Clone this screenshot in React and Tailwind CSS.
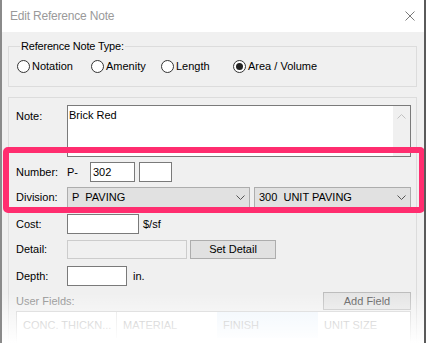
import { useState } from 'react';

export default function App() {
  const [type, setType] = useState('area');

  return (
    <div className="relative w-[426px] h-[343px] overflow-hidden bg-[#f0f0f0] border-l-2 border-r-2 border-l-[#8a8a8a] border-r-[#5a5a5a] font-['Liberation_Sans',Arial,sans-serif] text-[11px] text-black">
      {/* title bar */}
      <div className="h-[32px] bg-white flex items-center justify-between pl-[8px] pr-[9px]">
        <span className="text-[12px] text-[#9a9a9a] tracking-[-0.2px]">Edit Reference Note</span>
        <svg width="10" height="10" viewBox="0 0 10 10">
          <path d="M0.5 0.5 L9.5 9.5 M9.5 0.5 L0.5 9.5" stroke="#7a7a7a" strokeWidth="1" fill="none" />
        </svg>
      </div>

      <div className="pl-[6px] pr-[7px] pt-[14px]">
        {/* note type group */}
        <div className="relative h-[41px] border border-[#dcdcdc] pt-[13px] pl-[8px]">
          <span className="absolute -top-[7px] left-[11px] px-[1px] leading-[13px] bg-[#f0f0f0] tracking-[-0.2px]">
            Reference Note Type:
          </span>
          <div className="flex items-center h-[13px]">
            <Radio label="Notation" checked={type === 'notation'} onClick={() => setType('notation')} width="w-[74px]" />
            <Radio label="Amenity" checked={type === 'amenity'} onClick={() => setType('amenity')} width="w-[70px]" />
            <Radio label="Length" checked={type === 'length'} onClick={() => setType('length')} width="w-[72px]" />
            <Radio label="Area / Volume" checked={type === 'area'} onClick={() => setType('area')} width="" />
          </div>
        </div>

        {/* main panel */}
        <div className="mt-[10px] h-[300px] border border-[#dcdcdc] pl-[7px] pt-[7px]">
          <div className="flex">
            <span className="w-[51px] mt-[4px] leading-[14px]">Note:</span>
            <div className="w-[344px] h-[52px] border border-[#7a7a7a] bg-white flex">
              <div className="flex-1 pl-[1px] pt-[2px] leading-[14px]">Brick Red</div>
              <div className="w-[17px] bg-[#f0f0f0] flex flex-col items-center justify-between pt-[8px] pb-[4px] text-[#c2c2c2]">
                <Chevron up />
                <Chevron />
              </div>
            </div>
          </div>

          <div className="flex items-center mt-[5px] h-[20px]">
            <span className="w-[51px]">Number:</span>
            <span className="w-[23px]">P-</span>
            <div className="w-[45px] h-[20px] border border-[#7a7a7a] bg-white pl-[2px] flex items-center">302</div>
            <div className="ml-[4px] w-[33px] h-[20px] border border-[#7a7a7a] bg-white" />
          </div>

          <div className="flex items-center mt-[5px] h-[21px]">
            <span className="w-[51px]">Division:</span>
            <Select text="P  PAVING" width="w-[183px]" />
            <div className="w-[4px]" />
            <Select text="300  UNIT PAVING" width="w-[157px]" />
          </div>

          <div className="flex items-center mt-[6px] h-[20px]">
            <span className="w-[51px]">Cost:</span>
            <div className="w-[72px] h-[20px] border border-[#7a7a7a] bg-white" />
            <span className="ml-[4px]">$/sf</span>
          </div>

          <div className="flex items-center mt-[6px] h-[19px]">
            <span className="w-[51px]">Detail:</span>
            <div className="w-[120px] h-[19px] border border-[#cccccc] bg-[#f0f0f0]" />
            <button className="ml-[3px] w-[86px] h-[19px] border border-[#adadad] bg-[#e1e1e1] flex items-center justify-center">
              Set Detail
            </button>
          </div>

          <div className="flex items-center mt-[7px] h-[20px]">
            <span className="w-[51px]">Depth:</span>
            <div className="w-[60px] h-[20px] border border-[#7a7a7a] bg-white" />
            <span className="ml-[6px]">in.</span>
          </div>

          <div className="flex items-center justify-between mt-[6px] h-[18px] w-[395px]">
            <span className="text-[#8c8c8c]">User Fields:</span>
            <button className="w-[88px] h-[18px] border border-[#bdbdbd] bg-[#e5e5e5] flex items-center justify-center text-[#555]">
              Add Field
            </button>
          </div>

          <div className="mt-[1px] w-[395px] h-[40px] border border-[#cfcfcf] bg-white">
            <div className="flex h-[26px] text-[#a8a8a8]">
              <div className="w-[100px] border-r border-[#e3e3e3] pl-[6px] flex items-center">CONC. THICKN...</div>
              <div className="w-[100px] pl-[6px] flex items-center">MATERIAL</div>
              <div className="w-[101px] pl-[6px] flex items-center bg-[#eef5fc]">FINISH</div>
              <div className="flex-1 pl-[6px] flex items-center">UNIT SIZE</div>
            </div>
          </div>
        </div>
      </div>

      {/* fade at the bottom of the capture */}
      <div className="absolute left-0 right-0 bottom-0 h-[50px] bg-gradient-to-b from-transparent via-white/50 to-white pointer-events-none" />

      {/* highlight frame */}
      <div className="absolute left-[1px] top-[147px] w-[422px] h-[66px] border-[6px] border-[#ff2d6f] rounded-[5px] pointer-events-none" />
    </div>
  );
}

function Radio({ label, checked, onClick, width }) {
  return (
    <div className={`flex items-center gap-[2px] cursor-default ${width}`} onClick={onClick}>
      <span className="w-[13px] h-[13px] rounded-full border border-[#333] bg-white flex items-center justify-center">
        {checked && <span className="w-[7px] h-[7px] rounded-full bg-[#222]" />}
      </span>
      <span className="leading-[13px]">{label}</span>
    </div>
  );
}

function Select({ text, width }) {
  return (
    <div className={`${width} h-[21px] border border-[#adadad] bg-[#e1e1e1] flex items-center justify-between pl-[4px] pr-[4px]`}>
      <span className="whitespace-pre">{text}</span>
      <span className="text-[#555]"><Chevron /></span>
    </div>
  );
}

function Chevron({ up = false }) {
  return (
    <svg width="9" height="5" viewBox="0 0 9 5" className="block">
      <polyline
        points={up ? '0.5,4.5 4.5,0.5 8.5,4.5' : '0.5,0.5 4.5,4.5 8.5,0.5'}
        fill="none"
        stroke="currentColor"
        strokeWidth="1"
      />
    </svg>
  );
}
